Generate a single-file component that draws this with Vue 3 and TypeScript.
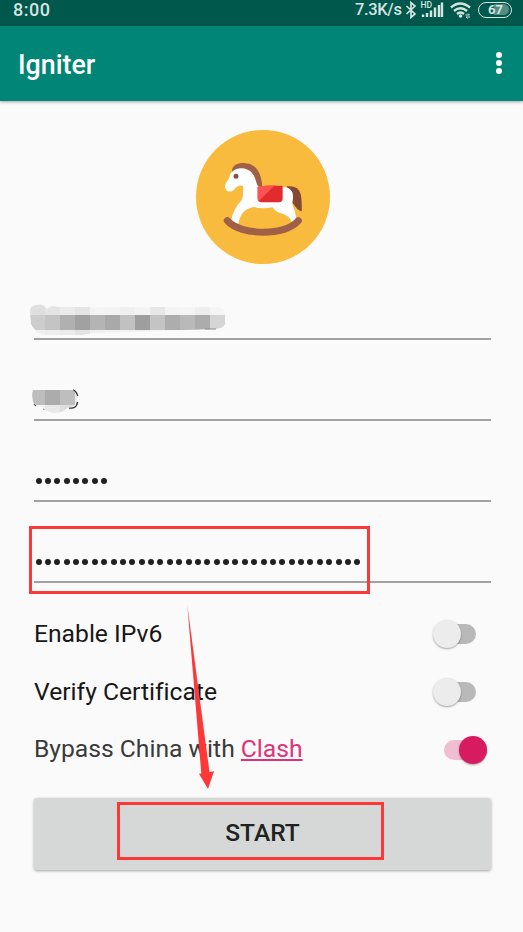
<script setup lang="ts">
import { ref } from 'vue'

interface Block { x: number; y: number; w: number; h: number; c: string }
interface Option { label: string; link?: string; on: boolean }

const mainShades = ['#cdcdcd', '#c4c4c4', '#b0b0b0', '#a1a1a1', '#b4b4b4', '#a9a9a9', '#c1c1c1', '#9e9e9e', '#c4c4c4', '#adadad', '#b9b9b9', '#acacac', '#d5d5d5']
const topShades = ['#dfdfdf', '#e4e4e4', '#ebebeb', '#e5e5e5', '#f4f4f4', '#f3f3f3', '#efefef', '#f3f3f3', '#e7e7e7', '#f3f3f3', '#f4f4f4', '#eeeeee', '#f4f4f4']
const lowShades = ['#f0f0f0', '#ededed', '#ebebeb', '#e3e3e3', '#efefef', '#f1f1f1', '#f2f2f2', '#efefef', '#f2f2f2', '#f2f2f2', '#f2f2f2', '#f2f2f2', '#f2f2f2']

const row = (shades: string[], y: number, h: number): Block[] =>
  shades.map((c, i) => ({ x: i * 15, y, w: 15, h, c }))

const addressBlocks: Block[] = [...row(topShades, 0, 11), ...row(mainShades, 11, 15), ...row(lowShades, 26, 6)]

const options = ref<Option[]>([
  { label: 'Enable IPv6', on: false },
  { label: 'Verify Certificate', on: false },
  { label: 'Bypass China with ', link: 'Clash', on: true },
])
</script>

<template>
  <div class="screen">
    <header class="status">
      <span class="clock">8:00</span>
      <div class="indicators">
        <span class="speed">7.3K/s</span>
        <svg class="bt" viewBox="0 0 12 18"><path d="M1.500 5 10 13 6 16.500V1.500L10 5 1.500 13" /></svg>
        <svg class="signal" viewBox="0 0 22 18">
          <text x="-.5" y="6.500">HD</text>
          <path d="M2 16V13.500M6 16V12M10 16V9.500M14 16V6.500M18 16V4M21 16V1.500" />
        </svg>
        <svg class="wifi" viewBox="0 0 22 18">
          <path d="M1 6.500Q10 -1.500 20 6.500M4 10Q10.500 4.500 17 10M7 13Q10.500 10 14 13" />
          <circle cx="10.500" cy="15" r="1.800" />
          <path class="fine" d="M15.500 14h4l-1.500-1.500M20 16h-4l1.500 1.500" />
        </svg>
        <span class="battery"><span class="level">67</span></span>
      </div>
    </header>
    <div class="appbar">
      <h1>Igniter</h1>
      <button class="more" aria-label="More"><i /><i /><i /></button>
    </div>

    <main>
      <svg class="logo" viewBox="33 29 402 402">
        <circle cx="234" cy="230" r="201" fill="#f8bb3d" />
        <path d="M305 198Q340 194 347 222Q351 239 350 273Q337 271 324 249Z" fill="#854832" />
        <path d="M141 155C140 134 157 128 176 128C211 129 230 153 232 202L218 206L190 158Z" fill="#9f6047" />
        <path d="M143 153C158 138 190 141 203 160C215 177 214 198 223 199H291C313 199 324 211 324 226Q325 238 321 249Q331 270 334 296L320 305Q312 284 288 279Q270 274 263 261Q233 267 207 260C181 264 164 280 160 312L138 302Q145 265 170 240C176 224 175 206 174 197C163 193 157 197 149 206C138 219 121 215 120 199C120 191 129 180 133 171Q136 158 143 153Z" fill="#fff" />
        <circle cx="153" cy="168" r="7.500" fill="#85503f" />
        <path d="M218 200Q255 193 293 197V234Q293 246 281 246H230Q218 246 218 234Z" fill="#e22b2f" />
        <path d="M218 200Q240 195 267 197L221 243Q218 240 218 234Z" fill="#ff5252" />
        <path d="M127 301C167 347 304 347 340 301" fill="none" stroke="#9f6047" stroke-width="21" stroke-linecap="round" />
      </svg>

      <form @submit.prevent>
        <div class="field">
          <svg class="masked address" viewBox="0 0 195 32">
            <clipPath id="address-shape"><path d="M0 7Q0 2 6 1Q13 -1 17 5Q22 0 28 3H187Q195 4 195 9V20Q193 25 184 25L157 26 102 28 63 29 52 31H15Q6 30 1 20Z" /></clipPath>
            <g clip-path="url(#address-shape)">
              <rect v-for="(b, i) in addressBlocks" :key="i" :x="b.x" :y="b.y" :width="b.w" :height="b.h" :fill="b.c" shape-rendering="crispEdges" />
            </g>
            <path d="M175 25h11" stroke="#888" />
          </svg>
        </div>
        <div class="field">
          <svg class="masked port" viewBox="0 0 50 26">
            <path d="M43 1Q47 3 47.500 7M47.500 13Q47 20 39 19" fill="none" stroke="#333" stroke-width="1.500" />
            <path d="M4 15l2 2M13 20h2" stroke="#555" stroke-width="1.200" />
            <clipPath id="port-shape"><path d="M3 1H43Q47 4 47 9Q47 15 42 18L37 19Q33 24 24 24Q16 23 12 18L4 15Q1 8 3 1Z" /></clipPath>
            <g clip-path="url(#port-shape)" shape-rendering="crispEdges">
              <path d="M0 1h15v15H0z" fill="#bdbdbd" /><path d="M15 1h15v15H15z" fill="#acacac" />
              <path d="M30 1h15v15H30z" fill="#bebebe" /><path d="M45 1h5v15h-5z" fill="#eee" />
              <path d="M0 16h15v10H0z" fill="#f4f4f4" /><path d="M15 16h15v10H15z" fill="#e8e8e8" />
              <path d="M30 16h15v10H30z" fill="#dedede" />
            </g>
          </svg>
        </div>
        <div class="field"><div class="dots"><i v-for="n in 8" :key="n" /></div></div>
        <div class="field"><div class="dots"><i v-for="n in 35" :key="n" /></div></div>

        <div class="options">
          <label v-for="o in options" :key="o.label" class="option" :class="{ linked: o.link }">
            <span class="label">{{ o.label }}<a v-if="o.link">{{ o.link }}</a></span>
            <span class="switch" :class="{ on: o.on }" @click="o.on = !o.on"><span class="thumb" /></span>
          </label>
        </div>
        <button class="start">START</button>
      </form>
    </main>

    <svg class="marks" viewBox="0 0 523 932">
      <rect x="30.500" y="527.500" width="338" height="65" />
      <rect x="118.500" y="803.500" width="264" height="55" />
      <path d="M187.300 605L201.300 773.500 199 773.800 208 789 214 771.300 209.500 772Z" />
    </svg>
  </div>
</template>

<style>
body { margin: 0; background: #fafafa; }
</style>

<style scoped>
.screen { position: relative; width: 523px; height: 932px; overflow: hidden; background: #fafafa; font-family: Roboto, "Liberation Sans", sans-serif; color: #171717; }
.status { box-sizing: border-box; display: flex; justify-content: space-between; align-items: center; height: 25.500px; padding: 0 11px 6.500px 13px; background: #00574b; color: #d4e4e1; }
.clock { font-size: 18px; letter-spacing: .5px; font-weight: 500; }
.indicators { display: flex; align-items: center; }
.speed { font-size: 16.500px; letter-spacing: -.35px; width: 49.500px; white-space: nowrap; font-weight: 500; }
.status svg { fill: none; stroke: #d4e4e1; stroke-width: 1.700; height: 18px; overflow: visible; }
.bt { width: 12px; }
.signal { width: 22px; margin-left: 4px; }
.signal path { stroke-width: 2.400; }
.signal text { font-size: 8.500px; font-weight: 500; fill: #d4e4e1; stroke: none; }
.wifi { width: 22px; margin-left: 7px; }
.status .wifi path { stroke-width: 2.400; }
.status .wifi .fine { stroke-width: 1; }
.wifi circle { fill: #d4e4e1; stroke: none; }
.battery { box-sizing: border-box; width: 34px; height: 16px; border: 1.800px solid #d4e4e1; border-radius: 8px; padding: 1.500px; margin-left: 6.500px; display: flex; }
.level { width: 26px; border-radius: 6px; background: linear-gradient(90deg, transparent 45%, #528b82 45%); font-size: 13px; line-height: 11.500px; text-align: center; font-weight: 700; padding-left: 2px; }
.appbar { box-sizing: border-box; height: 75.500px; display: flex; align-items: center; justify-content: space-between; padding: 3px 21px 0 18px; background: #008577; box-shadow: 0 1px 3px rgba(0, 0, 0, .35); }
h1 { margin: 0; color: #fff; font-size: 26.800px; font-weight: 500; line-height: 30px; }
.more { display: grid; gap: 2.200px; padding: 0; margin-bottom: 3px; border: 0; background: none; }
.more i { width: 6px; height: 6px; border-radius: 50%; background: #fff; }
main { display: flex; flex-direction: column; padding: 28.500px 32px 0 34px; }
.logo { width: 134px; height: 134px; margin-left: 161.500px; }
.field { box-sizing: border-box; height: 81px; display: flex; align-items: flex-end; border-bottom: 2px solid #a1a1a1; }
.field:first-child { height: 76.500px; }
.masked { display: block; flex: none; }
.address { width: 195px; height: 32px; margin: 0 0 2px -4px; }
.port { width: 50px; height: 26px; margin: 0 0 4px -4px; }
.dots { display: flex; gap: 3.380px; margin: 0 0 16px 1.500px; }
.dots i { width: 6px; height: 6px; border-radius: 50%; background: #202020; }
.options { padding-top: 22px; }
.option { display: flex; height: 58px; align-items: center; justify-content: space-between; }
.label { font-size: 24.700px; letter-spacing: -.02px; white-space: pre; margin-bottom: 2px; }
.linked .label { color: #3a3a3a; margin-bottom: 3px; }
.label a { color: #e03377; text-decoration: underline; text-decoration-thickness: 1.500px; text-underline-offset: 2px; }
.switch { width: 42px; height: 20px; margin: 0 15px 1px 0; border-radius: 10px; background: #b9b9b9; display: flex; align-items: center; }
.thumb { flex: none; width: 28px; height: 28px; border-radius: 50%; background: #ececec; box-shadow: 0 1px 2px rgba(0, 0, 0, .35); margin-left: -1px; }
.switch.on { width: 43px; margin: 0 4.500px 0 0; background: #f1bdd1; justify-content: flex-end; }
.on .thumb { background: #d81b60; }
.start { display: block; width: 457px; height: 72px; margin-top: 18.500px; padding: 0 0 2px; border: 0; border-radius: 3px; background: #d6d8d7; box-shadow: 0 1px 3px rgba(0, 0, 0, .35); color: #202222; font: 500 24.500px Roboto, "Liberation Sans", sans-serif; }
.marks { position: absolute; inset: 0; width: 523px; height: 932px; pointer-events: none; fill: #fc3938; }
.marks rect { fill: none; stroke: #fc3938; stroke-width: 3; }
</style>
